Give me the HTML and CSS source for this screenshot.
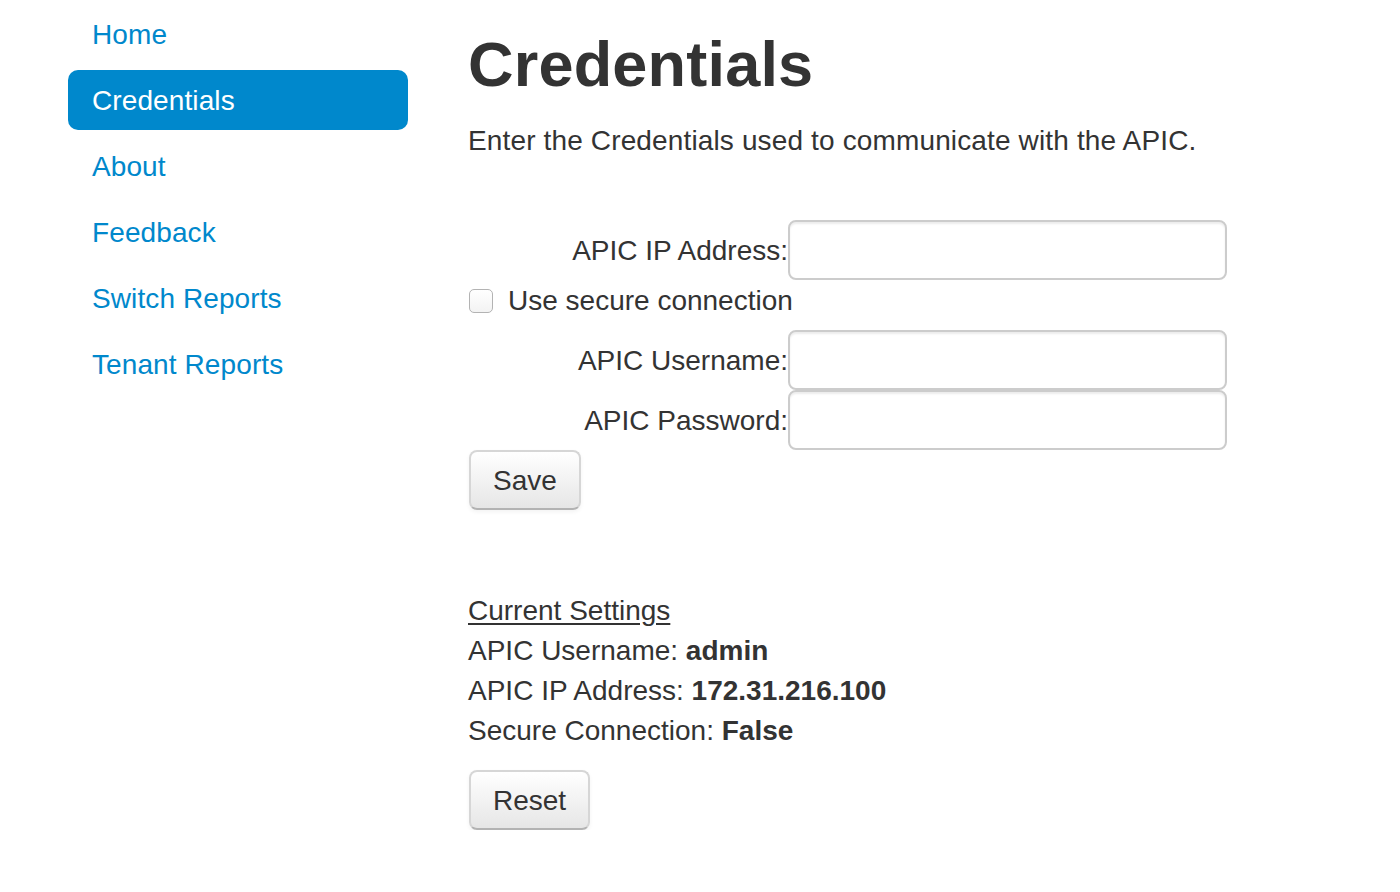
FILE: index.html
```html
<!DOCTYPE html>
<html>
<head>
<meta charset="utf-8">
<title>Credentials</title>
<link rel="stylesheet" href="styles.css">
</head>
<body>
<div class="layout">
  <nav class="sidebar">
    <ul class="nav-pills">
      <li><a href="#">Home</a></li>
      <li class="active"><a href="#">Credentials</a></li>
      <li><a href="#">About</a></li>
      <li><a href="#">Feedback</a></li>
      <li><a href="#">Switch Reports</a></li>
      <li><a href="#">Tenant Reports</a></li>
    </ul>
  </nav>
  <main class="content">
    <h1 class="title">Credentials</h1>
    <p class="intro">Enter the Credentials used to communicate with the APIC.</p>
    <form class="cred-form">
      <div class="field">
        <label class="field-label" for="ip">APIC IP Address:</label>
        <input class="text-input" id="ip" type="text">
      </div>
      <label class="check-row"><input class="check" type="checkbox"> Use secure connection</label>
      <div class="field">
        <label class="field-label" for="user">APIC Username:</label>
        <input class="text-input" id="user" type="text">
      </div>
      <div class="field">
        <label class="field-label" for="pass">APIC Password:</label>
        <input class="text-input" id="pass" type="password">
      </div>
      <button class="btn" type="button">Save</button>
    </form>
    <section class="settings">
      <div class="settings-title">Current Settings</div>
      <div class="line">APIC Username: <b>admin</b></div>
      <div class="line">APIC IP Address: <b>172.31.216.100</b></div>
      <div class="line">Secure Connection: <b>False</b></div>
      <button class="btn btn-reset" type="button">Reset</button>
    </section>
  </main>
</div>
</body>
</html>
```
FILE: styles.css
```css
html, body {
  margin: 0;
  padding: 0;
  background: #fff;
}
body {
  font-family: "Liberation Sans", Arial, Helvetica, sans-serif;
  font-size: 28px;
  line-height: 40px;
  color: #333;
}
.layout {
  display: flex;
  padding: 4px 0 0 68px;
}
.sidebar {
  width: 340px;
  flex: none;
}
.nav-pills {
  list-style: none;
  margin: 0;
  padding: 0;
  display: flex;
  flex-direction: column;
  gap: 6px;
}
.nav-pills a {
  display: block;
  padding: 11px 24px 9px;
  border-radius: 10px;
  color: #0088cc;
  text-decoration: none;
  letter-spacing: 0.1px;
}
.nav-pills .active a {
  background: #0088cc;
  color: #fff;
}
.content {
  margin-left: 60px;
  padding-top: 20px;
}
.title {
  margin: 0 0 16px;
  font-size: 63px;
  line-height: 80px;
  font-weight: bold;
  color: #333;
  letter-spacing: 0.2px;
}
.intro {
  margin: 0 0 60px;
  padding-top: 1px;
  height: 39px;
  letter-spacing: 0.14px;
}
.cred-form {
  display: flex;
  flex-direction: column;
  align-items: flex-start;
}
.field {
  display: flex;
  align-items: center;
}
.field-label {
  width: 320px;
  text-align: right;
  padding-top: 2px;
}
.text-input {
  box-sizing: border-box;
  width: 439px;
  height: 60px;
  margin: 0;
  padding: 8px 12px;
  border: 2px solid #ccc;
  border-radius: 8px;
  background: #fff;
  box-shadow: inset 0 2px 2px rgba(0,0,0,0.075);
  font: inherit;
  color: #555;
}
.check-row {
  display: flex;
  align-items: center;
  height: 40px;
  margin-bottom: 10px;
  gap: 15px;
  padding-top: 2px;
  box-sizing: border-box;
}
.check {
  appearance: none;
  -webkit-appearance: none;
  box-sizing: border-box;
  width: 24px;
  height: 24px;
  margin: 0 0 0 1px;
  border: 1.5px solid #b3b3b3;
  border-radius: 5px;
  background: linear-gradient(#fff, #f3f3f3);
}
.btn {
  box-sizing: border-box;
  height: 60px;
  margin: 0 0 0 1px;
  padding: 2px 22px 0;
  font: inherit;
  color: #333;
  background: linear-gradient(#ffffff, #e6e6e6);
  border: 2px solid #d6d6d6;
  border-bottom-color: #b3b3b3;
  border-radius: 8px;
  box-shadow: inset 0 2px 0 rgba(255,255,255,0.2), 0 2px 4px rgba(0,0,0,0.05);
}
.settings {
  margin-top: 80px;
  display: flex;
  flex-direction: column;
  align-items: flex-start;
}
.settings-title,
.line {
  padding-top: 1px;
  height: 39px;
}
.settings-title {
  text-decoration: underline;
  text-underline-offset: 3px;
}
.btn-reset {
  margin-top: 20px;
}
```
